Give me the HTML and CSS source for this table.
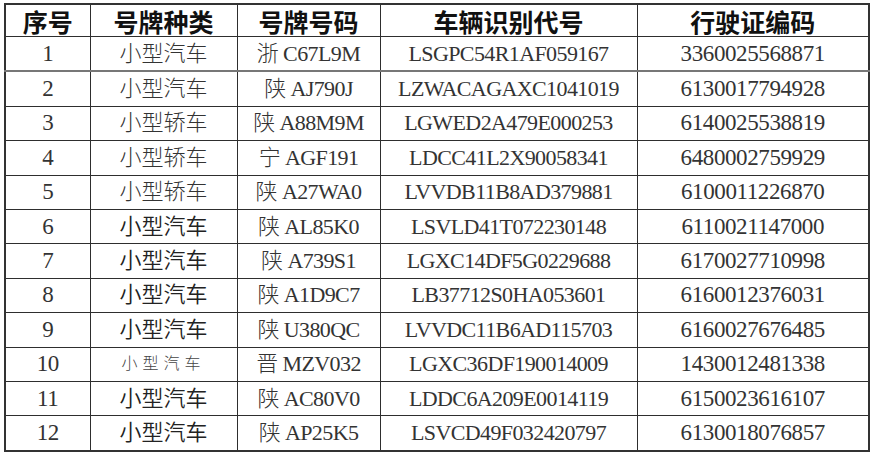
FILE: index.html
```html
<!DOCTYPE html>
<html lang="zh-CN">
<head>
<meta charset="utf-8">
<title>车辆信息表</title>
<link rel="stylesheet" href="styles.css">
</head>
<body>
<table class="grid">
  <colgroup>
    <col class="c1"><col class="c2"><col class="c3"><col class="c4"><col class="c5">
  </colgroup>
  <thead>
    <tr><th>序号</th><th>号牌种类</th><th>号牌号码</th><th>车辆识别代号</th><th>行驶证编码</th></tr>
  </thead>
  <tbody>
    <tr class="thick"><td class="num">1</td><td>小型汽车</td><td class="code">浙 C67L9M</td><td class="code">LSGPC54R1AF059167</td><td class="num">3360025568871</td></tr>
    <tr><td class="num">2</td><td>小型汽车</td><td class="code">陕 AJ790J</td><td class="code">LZWACAGAXC1041019</td><td class="num">6130017794928</td></tr>
    <tr><td class="num">3</td><td>小型轿车</td><td class="code">陕 A88M9M</td><td class="code">LGWED2A479E000253</td><td class="num">6140025538819</td></tr>
    <tr><td class="num">4</td><td>小型轿车</td><td class="code">宁 AGF191</td><td class="code">LDCC41L2X90058341</td><td class="num">6480002759929</td></tr>
    <tr><td class="num">5</td><td>小型轿车</td><td class="code">陕 A27WA0</td><td class="code">LVVDB11B8AD379881</td><td class="num">6100011226870</td></tr>
    <tr><td class="num">6</td><td class="dark">小型汽车</td><td class="code">陕 AL85K0</td><td class="code">LSVLD41T072230148</td><td class="num">6110021147000</td></tr>
    <tr><td class="num">7</td><td class="dark">小型汽车</td><td class="code">陕 A739S1</td><td class="code">LGXC14DF5G0229688</td><td class="num">6170027710998</td></tr>
    <tr><td class="num">8</td><td class="dark">小型汽车</td><td class="code">陕 A1D9C7</td><td class="code">LB37712S0HA053601</td><td class="num">6160012376031</td></tr>
    <tr><td class="num">9</td><td class="dark">小型汽车</td><td class="code">陕 U380QC</td><td class="code">LVVDC11B6AD115703</td><td class="num">6160027676485</td></tr>
    <tr><td class="num">10</td><td class="small">小型汽车</td><td class="code">晋 MZV032</td><td class="code">LGXC36DF190014009</td><td class="num">1430012481338</td></tr>
    <tr><td class="num">11</td><td class="dark">小型汽车</td><td class="code">陕 AC80V0</td><td class="code">LDDC6A209E0014119</td><td class="num">6150023616107</td></tr>
    <tr><td class="num">12</td><td class="dark">小型汽车</td><td class="code">陕 AP25K5</td><td class="code">LSVCD49F032420797</td><td class="num">6130018076857</td></tr>
  </tbody>
</table>
</body>
</html>
```
FILE: styles.css
```css
html, body {
  margin: 0;
  padding: 0;
  background: #ffffff;
}
body {
  padding: 3px 0 0 4px;
}
.grid {
  border-collapse: collapse;
  table-layout: fixed;
  width: 864px;
  border: 2px solid #333;
  font-family: "Liberation Serif", "Noto Sans CJK SC", serif;
  color: #333;
}
.c1 { width: 85px; }
.c2 { width: 147px; }
.c3 { width: 143px; }
.c4 { width: 257px; }
.c5 { width: 232px; }
.grid th, .grid td {
  border: 1px solid #2e2e2e;
  padding: 0;
  text-align: center;
  vertical-align: middle;
  white-space: nowrap;
}
.grid th {
  height: 31px;
  font-family: "Noto Sans CJK SC", sans-serif;
  font-weight: 700;
  font-size: 25px;
  line-height: 30px;
  color: #111;
}
.grid td {
  height: 33.4px;
  font-size: 22px;
  line-height: 24px;
  font-weight: 300;
}
.grid td.num {
  font-size: 23px;
  letter-spacing: -0.4px;
}
.grid td.code {
  letter-spacing: -0.6px;
}
.grid td.dark {
  color: #222;
  font-weight: 350;
}
.grid td.small {
  font-size: 16px;
  letter-spacing: 5px;
  color: #444;
}
.grid tr.thick td {
  border-bottom: 2px solid #777;
}
```
